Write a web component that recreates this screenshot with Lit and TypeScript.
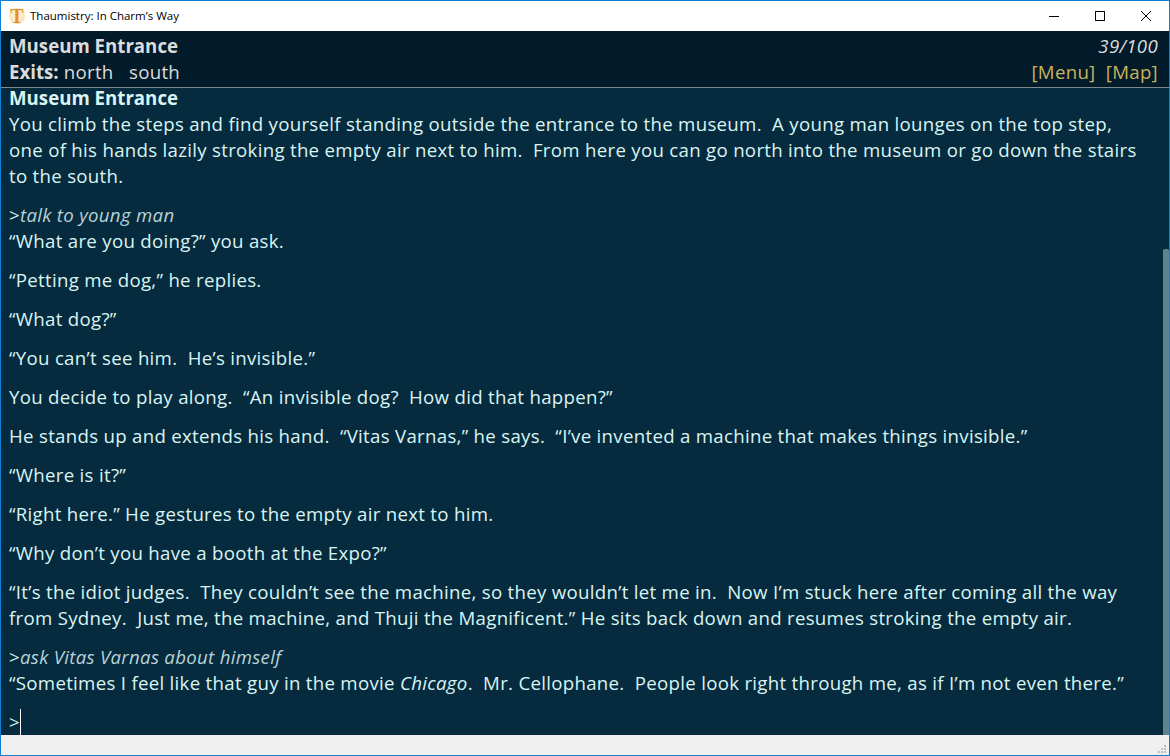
import { LitElement, html, css } from 'lit';
import { customElement } from 'lit/decorators.js';

@customElement('app-root')
export class AppRoot extends LitElement {
  static styles = css`
    :host {
      display: flex;
      flex-direction: column;
      width: 1170px;
      height: 756px;
      box-sizing: border-box;
      border: 1px solid #0f7fd4;
      font-family: 'Open Sans', sans-serif;
      font-size: 18.67px;
      line-height: 26px;
      letter-spacing: 0.29px;
      overflow: hidden;
      background: #f0f0f0;
    }

    .titlebar {
      display: flex;
      align-items: center;
      height: 30px;
      flex: none;
      background: #fff;
      color: #000;
      font-size: 11.5px;
      line-height: 16px;
      letter-spacing: 0;
    }

    .logo {
      flex: none;
      width: 16px;
      height: 16px;
      margin: 0 5px 0 8px;
      border-radius: 50%;
      background: radial-gradient(circle at 50% 45%, #fdf0cf 35%, #f6d596 100%);
      color: #e8912a;
      font-family: 'Liberation Serif', serif;
      font-weight: bold;
      font-size: 20px;
      line-height: 16px;
      text-align: center;
    }

    .title {
      flex: 1;
    }

    .winbtn {
      display: flex;
      align-items: center;
      justify-content: center;
      width: 46px;
      height: 30px;
    }

    .winbtn svg {
      display: block;
      width: 10px;
      height: 10px;
      fill: none;
      stroke: #000;
      stroke-width: 1;
    }

    .status {
      display: flex;
      justify-content: space-between;
      flex: none;
      height: 57px;
      box-sizing: border-box;
      padding: 2px 11px 0 8px;
      background: #021b2a;
      border-bottom: 1px solid #7d8a90;
      color: #dcdcdc;
    }

    b,
    .heading {
      font-weight: 700;
      letter-spacing: 0;
    }

    .status-right {
      text-align: right;
    }

    .score {
      font-style: italic;
    }

    .links {
      color: #c9b25e;
    }

    .main {
      display: flex;
      flex: 1;
      min-height: 0;
      background: #062a3e;
    }

    .story {
      flex: 1;
      min-width: 0;
      margin-top: -3px;
      padding: 0 20px 0 8px;
      color: #d9f4f2;
    }

    .story p,
    .story div {
      white-space: pre-wrap;
    }

    .story p {
      margin: 0 0 13px;
    }

    .command {
      color: #b6d3d6;
      font-style: italic;
    }

    .caret {
      color: #d9f4f2;
      font-style: normal;
    }

    .cursor {
      display: inline-block;
      width: 1px;
      height: 26px;
      vertical-align: top;
      background: #fff;
    }

    .track {
      display: flex;
      flex-direction: column;
      justify-content: flex-end;
      flex: none;
      width: 6px;
    }

    .thumb {
      height: 486px;
      background: #5f828f;
      border-radius: 2px 2px 0 0;
    }

    .footer {
      display: flex;
      justify-content: flex-end;
      align-items: flex-end;
      flex: none;
      height: 20px;
      background: #f0f0f0;
    }

    .grip {
      display: block;
      width: 12px;
      height: 12px;
      margin: 0 1px 1px 0;
      fill: #bdbdbd;
    }
  `;

  render() {
    return html`
      <div class="titlebar">
        <span class="logo">T</span>
        <span class="title">Thaumistry: In Charm’s Way</span>
        <span class="winbtn"><svg viewBox="0 0 10 10"><path d="M0 5.5h10" /></svg></span>
        <span class="winbtn"><svg viewBox="0 0 10 10"><rect x=".5" y=".5" width="9" height="9" /></svg></span>
        <span class="winbtn"><svg viewBox="0 0 10 10"><path d="M0 0l10 10M10 0L0 10" /></svg></span>
      </div>
      <div class="status">
        <div>
          <div><b>Museum Entrance</b></div>
          <div><b>Exits:</b> north &nbsp; south</div>
        </div>
        <div class="status-right">
          <div class="score">39/100</div>
          <div class="links">[Menu] &nbsp;[Map]</div>
        </div>
      </div>
      <div class="main">
        <div class="story">
          <div class="heading">Museum Entrance</div>
          <p>You climb the steps and find yourself standing outside the entrance to the museum.  A young man lounges on the top step, one of his hands lazily stroking the empty air next to him.  From here you can go north into the museum or go down the stairs to the south.</p>
          <div class="command"><span class="caret">&gt;</span>talk to young man</div>
          <p>“What are you doing?” you ask.</p>
          <p>“Petting me dog,” he replies.</p>
          <p>“What dog?”</p>
          <p>“You can’t see him.  He’s invisible.”</p>
          <p>You decide to play along.  “An invisible dog?  How did that happen?”</p>
          <p>He stands up and extends his hand.  “Vitas Varnas,” he says.  “I’ve invented a machine that makes things invisible.”</p>
          <p>“Where is it?”</p>
          <p>“Right here.” He gestures to the empty air next to him.</p>
          <p>“Why don’t you have a booth at the Expo?”</p>
          <p>“It’s the idiot judges.  They couldn’t see the machine, so they wouldn’t let me in.  Now I’m stuck here after coming all the way from Sydney.  Just me, the machine, and Thuji the Magnificent.” He sits back down and resumes stroking the empty air.</p>
          <div class="command"><span class="caret">&gt;</span>ask Vitas Varnas about himself</div>
          <p>“Sometimes I feel like that guy in the movie <i>Chicago</i>.  Mr. Cellophane.  People look right through me, as if I’m not even there.”</p>
          <div>&gt;<span class="cursor"></span></div>
        </div>
        <div class="track"><div class="thumb"></div></div>
      </div>
      <div class="footer">
        <svg class="grip" viewBox="0 0 12 12">
          <rect x="8" y="3" width="2" height="2" />
          <rect x="5" y="6" width="2" height="2" />
          <rect x="8" y="6" width="2" height="2" />
          <rect x="2" y="9" width="2" height="2" />
          <rect x="5" y="9" width="2" height="2" />
          <rect x="8" y="9" width="2" height="2" />
        </svg>
      </div>
    `;
  }
}
